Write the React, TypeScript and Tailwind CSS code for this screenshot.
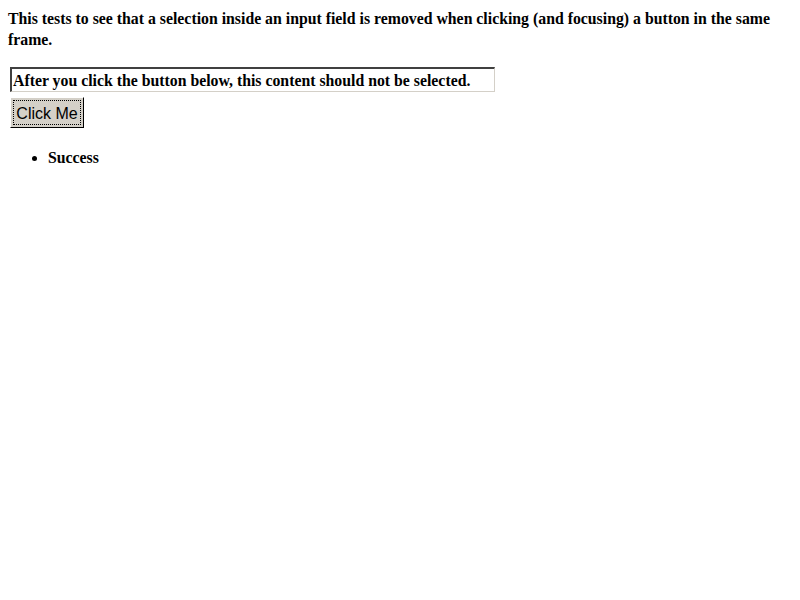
export default function App() {
  return (
    <div className="min-h-[600px] bg-white text-black">
      <div className="px-[8px] pt-[8px] font-['Liberation_Serif',serif] font-bold text-[15.8px] leading-[21px]">
        <div>
          This tests to see that a selection inside an input field is removed when clicking (and focusing) a button in the same frame.
        </div>
        <div className="mt-[17px] ml-[2px]">
          <div className="w-[485px] h-[25px] border-t-2 border-l-2 border-b border-r border-t-[#404040] border-l-[#404040] border-b-[#d4d0c8] border-r-[#d4d0c8] flex items-center px-[1px] pt-[1px] leading-none">
            After you click the button below, this content should not be selected.
          </div>
        </div>
        <div className="mt-[5px] ml-[2px]">
          <div className="w-[74px] h-[31px] bg-[#d4d0c8] border border-t-white border-l-white border-b-black border-r-black p-[2px]">
            <div className="w-full h-full border border-dotted border-black flex items-center justify-center pt-[2px] font-['Liberation_Sans',sans-serif] font-normal text-[16px] leading-none">
              Click Me
            </div>
          </div>
        </div>
        <ul className="mt-[19px] pl-[40px] list-disc">
          <li>Success</li>
        </ul>
      </div>
    </div>
  );
}
